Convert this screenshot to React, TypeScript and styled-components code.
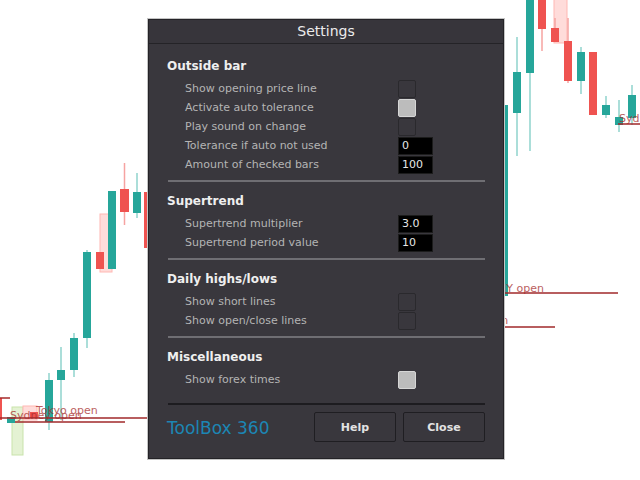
import React from 'react';
import styled, { createGlobalStyle } from 'styled-components';

const GlobalStyle = createGlobalStyle`
  html, body {
    margin: 0;
    padding: 0;
    background: #ffffff;
  }
`;

const Stage = styled.div`
  position: relative;
  width: 640px;
  height: 480px;
  overflow: hidden;
  background: #ffffff;
  font-family: 'DejaVu Sans', Verdana, sans-serif;
`;

const ChartSvg = styled.svg`
  position: absolute;
  left: 0;
  top: 0;
`;

const Window = styled.div`
  position: absolute;
  left: 148px;
  top: 19px;
  width: 356px;
  height: 440px;
  box-sizing: border-box;
  background: #39373d;
  border: 1px solid #242327;
  box-shadow: 0 0 0 1px #c4c4c4;
  display: flex;
  flex-direction: column;
`;

const TitleBar = styled.div`
  height: 23px;
  line-height: 23px;
  text-align: center;
  color: #ececec;
  font-size: 14px;
  background: #37353b;
  border-bottom: 1px solid #242327;
`;

const Body = styled.div`
  padding: 12px 18px 0 18px;
  display: flex;
  flex-direction: column;
`;

const Section = styled.div`
  display: flex;
  flex-direction: column;
`;

const SectionTitle = styled.div`
  height: 20px;
  line-height: 20px;
  margin-bottom: 3px;
  color: #efefef;
  font-size: 12px;
  font-weight: 600;
`;

const Row = styled.div`
  display: grid;
  grid-template-columns: 231px auto;
  align-items: center;
  height: 19px;
`;

const Label = styled.span`
  padding-left: 18px;
  color: #b4b4b4;
  font-size: 11px;
  white-space: nowrap;
`;

const Checkbox = styled.span<{ $checked?: boolean }>`
  display: block;
  width: 18px;
  height: 18px;
  box-sizing: border-box;
  border-radius: 2px;
  background: ${p => (p.$checked ? '#bcbcbc' : '#39373d')};
  border: 1px solid ${p => (p.$checked ? '#d6d6d6' : '#2a292d')};
`;

const ValueBox = styled.span`
  display: block;
  width: 35px;
  height: 18px;
  box-sizing: border-box;
  background: #000000;
  border: 1px solid #1c1c1c;
  color: #e6e6e6;
  font-size: 11px;
  line-height: 16px;
  padding-left: 3px;
`;

const Divider = styled.div<{ $dark?: boolean }>`
  height: 2px;
  margin: ${p => (p.$dark ? '14px 0 7px 1px' : '6px 0 9px 1px')};
  background: ${p => (p.$dark ? '#1d1c20' : '#6f6e73')};
`;

const Footer = styled.div`
  display: flex;
  align-items: center;
  justify-content: space-between;
  height: 30px;
`;

const Brand = styled.span`
  color: #1c86b4;
  font-size: 17px;
  padding-top: 2px;
`;

const Buttons = styled.div`
  display: flex;
  gap: 7px;
`;

const Button = styled.button`
  width: 82px;
  height: 30px;
  box-sizing: border-box;
  background: #39373d;
  border: 1px solid #1f1e22;
  border-radius: 2px;
  color: #e2e2e2;
  font-family: 'DejaVu Sans', Verdana, sans-serif;
  font-size: 11px;
  font-weight: 600;
  padding: 0;
`;

type Control = { kind: 'check'; on: boolean } | { kind: 'value'; value: string };

interface Setting {
  label: string;
  control: Control;
}

interface Group {
  title: string;
  items: Setting[];
}

const groups: Group[] = [
  {
    title: 'Outside bar',
    items: [
      { label: 'Show opening price line', control: { kind: 'check', on: false } },
      { label: 'Activate auto tolerance', control: { kind: 'check', on: true } },
      { label: 'Play sound on change', control: { kind: 'check', on: false } },
      { label: 'Tolerance if auto not used', control: { kind: 'value', value: '0' } },
      { label: 'Amount of checked bars', control: { kind: 'value', value: '100' } },
    ],
  },
  {
    title: 'Supertrend',
    items: [
      { label: 'Supertrend multiplier', control: { kind: 'value', value: '3.0' } },
      { label: 'Supertrend period value', control: { kind: 'value', value: '10' } },
    ],
  },
  {
    title: 'Daily highs/lows',
    items: [
      { label: 'Show short lines', control: { kind: 'check', on: false } },
      { label: 'Show open/close lines', control: { kind: 'check', on: false } },
    ],
  },
  {
    title: 'Miscellaneous',
    items: [{ label: 'Show forex times', control: { kind: 'check', on: true } }],
  },
];

// candles: x, width, body top, body bottom, wick top, wick bottom, up?
type Candle = [number, number, number, number, number, number, boolean];

const candles: Candle[] = [
  [7, 8, 417, 423, 417, 423, true],
  [45, 8, 380, 422, 373, 430, true],
  [57, 8, 370, 380, 347, 420, true],
  [70, 8, 338, 370, 333, 377, true],
  [83, 8, 252, 338, 250, 348, true],
  [96, 8, 252, 269, 252, 269, false],
  [108, 8, 191, 269, 191, 269, true],
  [120, 9, 189, 212, 163, 225, false],
  [133, 8, 192, 213, 173, 218, true],
  [144, 6, 192, 248, 192, 248, false],
  [500, 8, 105, 296, 105, 296, true],
  [513, 8, 72, 113, 37, 156, true],
  [526, 8, -2, 73, -2, 151, true],
  [538, 8, -2, 29, -2, 51, false],
  [551, 8, 28, 42, 18, 42, false],
  [564, 8, 41, 81, 18, 83, false],
  [577, 8, 52, 81, 47, 94, true],
  [589, 8, 52, 115, 52, 115, false],
  [602, 8, 105, 115, 96, 118, true],
  [615, 8, 117, 125, 100, 132, true],
  [628, 8, 95, 118, 85, 125, true],
];

const Chart: React.FC = () => (
  <ChartSvg width={640} height={480} viewBox="0 0 640 480">
    <rect x={12} y={407} width={11} height={48} fill="#e4f2d3" stroke="#c9e3ab" />
    <rect x={23} y={406} width={14} height={14} fill="#ffdcda" stroke="#ffb8b3" />
    <rect x={100} y={214} width={12} height={58} fill="#ffdcda" stroke="#ffb8b3" />
    <rect x={554} y={-2} width={13} height={45} fill="#ffdcda" stroke="#ffb8b3" />
    {candles.map(([x, w, t, b, wt, wb, up], i) => (
      <g key={i}>
        <line
          x1={x + w / 2}
          x2={x + w / 2}
          y1={wt}
          y2={wb}
          stroke={up ? '#8fd3cc' : '#f6a3a1'}
          strokeWidth={1.5}
        />
        <rect x={x} y={t} width={w} height={b - t} fill={up ? '#26a69a' : '#ef5350'} />
      </g>
    ))}
    <rect x={0} y={398} width={2} height={22} fill="#ef5350" />
    <line x1={0} x2={10} y1={398} y2={398} stroke="#a52a2a" strokeWidth={1.5} />
    <rect x={30} y={412} width={8} height={6} fill="#ef5350" />
    <line x1={0} x2={148} y1={418} y2={418} stroke="#a0282a" strokeWidth={1.5} />
    <line x1={15} x2={125} y1={422} y2={422} stroke="#a0282a" strokeWidth={1.5} />
    <line x1={500} x2={618} y1={293} y2={293} stroke="#a0282a" strokeWidth={1.5} />
    <line x1={500} x2={555} y1={327} y2={327} stroke="#a0282a" strokeWidth={1.5} />
    <line x1={618} x2={640} y1={124} y2={124} stroke="#a0282a" strokeWidth={1.5} />
    <g fontFamily="'DejaVu Sans', sans-serif" fontSize={11} fill="#a52a2a" opacity={0.75}>
      <text x={10} y={419}>Sydney open</text>
      <text x={36} y={414}>Tokyo open</text>
      <text x={498} y={292}>NY open</text>
      <text x={437} y={324}>London open</text>
      <text x={619} y={122}>Sydney open</text>
    </g>
  </ChartSvg>
);

const App: React.FC = () => {
  return (
    <Stage>
      <GlobalStyle />
      <Chart />
      <Window>
        <TitleBar>Settings</TitleBar>
        <Body>
          {groups.map((group, gi) => (
            <React.Fragment key={group.title}>
              {gi > 0 && <Divider />}
              <Section>
                <SectionTitle>{group.title}</SectionTitle>
                {group.items.map(item => (
                  <Row key={item.label}>
                    <Label>{item.label}</Label>
                    {item.control.kind === 'check' ? (
                      <Checkbox $checked={item.control.on} />
                    ) : (
                      <ValueBox>{item.control.value}</ValueBox>
                    )}
                  </Row>
                ))}
              </Section>
            </React.Fragment>
          ))}
          <Divider $dark />
          <Footer>
            <Brand>ToolBox 360</Brand>
            <Buttons>
              <Button>Help</Button>
              <Button>Close</Button>
            </Buttons>
          </Footer>
        </Body>
      </Window>
    </Stage>
  );
};

export default App;
